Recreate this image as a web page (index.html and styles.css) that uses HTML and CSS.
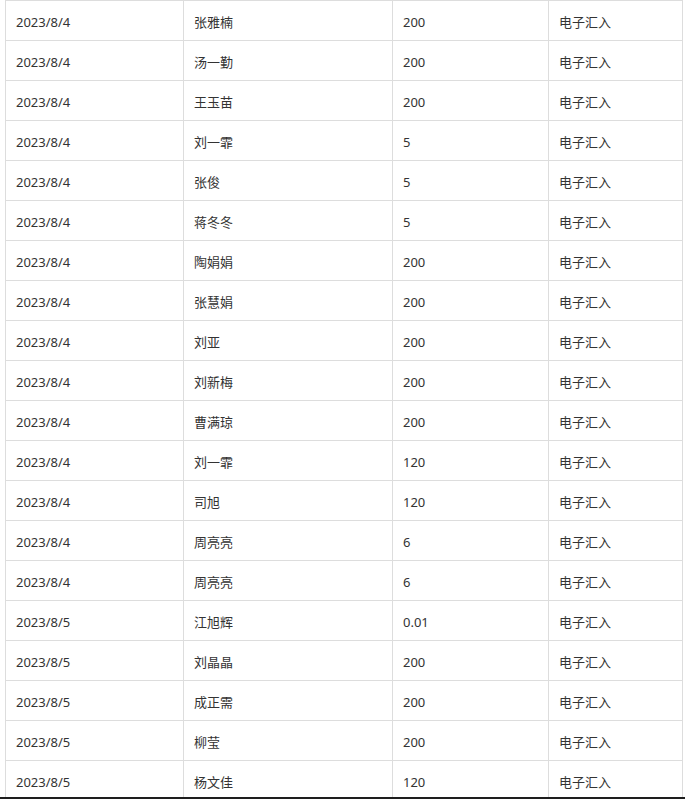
FILE: index.html
```html
<!DOCTYPE html>
<html lang="zh-CN">
<head>
<meta charset="utf-8">
<link rel="stylesheet" href="styles.css">
</head>
<body>
<table class="ledger">
<colgroup><col class="c1"><col class="c2"><col class="c3"><col class="c4"></colgroup>
<tbody>
<tr><td>2023/8/4</td><td>张雅楠</td><td>200</td><td>电子汇入</td></tr>
<tr><td>2023/8/4</td><td>汤一勤</td><td>200</td><td>电子汇入</td></tr>
<tr><td>2023/8/4</td><td>王玉苗</td><td>200</td><td>电子汇入</td></tr>
<tr><td>2023/8/4</td><td>刘一霏</td><td>5</td><td>电子汇入</td></tr>
<tr><td>2023/8/4</td><td>张俊</td><td>5</td><td>电子汇入</td></tr>
<tr><td>2023/8/4</td><td>蒋冬冬</td><td>5</td><td>电子汇入</td></tr>
<tr><td>2023/8/4</td><td>陶娟娟</td><td>200</td><td>电子汇入</td></tr>
<tr><td>2023/8/4</td><td>张慧娟</td><td>200</td><td>电子汇入</td></tr>
<tr><td>2023/8/4</td><td>刘亚</td><td>200</td><td>电子汇入</td></tr>
<tr><td>2023/8/4</td><td>刘新梅</td><td>200</td><td>电子汇入</td></tr>
<tr><td>2023/8/4</td><td>曹满琼</td><td>200</td><td>电子汇入</td></tr>
<tr><td>2023/8/4</td><td>刘一霏</td><td>120</td><td>电子汇入</td></tr>
<tr><td>2023/8/4</td><td>司旭</td><td>120</td><td>电子汇入</td></tr>
<tr><td>2023/8/4</td><td>周亮亮</td><td>6</td><td>电子汇入</td></tr>
<tr><td>2023/8/4</td><td>周亮亮</td><td>6</td><td>电子汇入</td></tr>
<tr><td>2023/8/5</td><td>江旭辉</td><td>0.01</td><td>电子汇入</td></tr>
<tr><td>2023/8/5</td><td>刘晶晶</td><td>200</td><td>电子汇入</td></tr>
<tr><td>2023/8/5</td><td>成正需</td><td>200</td><td>电子汇入</td></tr>
<tr><td>2023/8/5</td><td>柳莹</td><td>200</td><td>电子汇入</td></tr>
<tr><td>2023/8/5</td><td>杨文佳</td><td>120</td><td>电子汇入</td></tr>
</tbody>
</table>
<div class="edge"></div>
</body>
</html>
```
FILE: styles.css
```css
html, body {
  margin: 0;
  padding: 0;
  background: #fff;
  overflow: hidden;
}
body {
  font-family: "Noto Sans", "Noto Sans CJK SC", sans-serif;
  font-size: 13px;
  color: #333;
}
.ledger {
  margin-left: 5px;
  border-collapse: collapse;
  table-layout: fixed;
  width: 677px;
}
.c1 { width: 178px; }
.c2 { width: 209px; }
.c3 { width: 156px; }
.c4 { width: 134px; }
.ledger td {
  border: 1px solid #ddd;
  height: 40px;
  box-sizing: border-box;
  padding: 3px 10px 0 10px;
  vertical-align: middle;
  line-height: 18px;
  white-space: nowrap;
}
.edge {
  position: fixed;
  left: 0;
  right: 0;
  bottom: 0;
  height: 2px;
  background: #1e1e1e;
}
```
